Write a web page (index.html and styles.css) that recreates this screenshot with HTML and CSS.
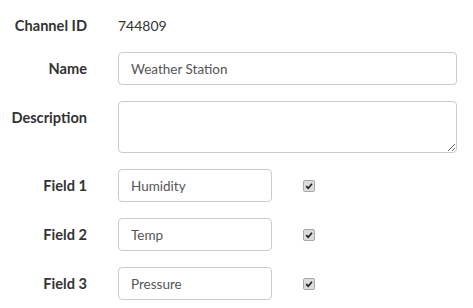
FILE: index.html
```html
<!DOCTYPE html>
<html lang="en">
<head>
    <meta charset="UTF-8">
    <title>Channel Settings</title>
    <link rel="stylesheet" href="styles.css">
</head>
<body>

<form class="channel-form">
    <div class="row row-id">
        <label class="label">Channel ID</label>
        <span class="value">744809</span>
    </div>
    <div class="row">
        <label class="label" for="name">Name</label>
        <input class="input input-wide" id="name" type="text" value="Weather Station">
    </div>
    <div class="row">
        <label class="label" for="desc">Description</label>
        <textarea class="input input-wide textarea" id="desc"></textarea>
    </div>
    <div class="row">
        <label class="label" for="f1">Field 1</label>
        <input class="input input-field" id="f1" type="text" value="Humidity">
        <span class="check"><svg viewBox="0 0 12 12" width="12" height="12"><path d="M2.6 6.2 L5 8.6 L9.6 3.2" fill="none" stroke="#222" stroke-width="2"/></svg></span>
    </div>
    <div class="row">
        <label class="label" for="f2">Field 2</label>
        <input class="input input-field" id="f2" type="text" value="Temp">
        <span class="check"><svg viewBox="0 0 12 12" width="12" height="12"><path d="M2.6 6.2 L5 8.6 L9.6 3.2" fill="none" stroke="#222" stroke-width="2"/></svg></span>
    </div>
    <div class="row">
        <label class="label" for="f3">Field 3</label>
        <input class="input input-field" id="f3" type="text" value="Pressure">
        <span class="check"><svg viewBox="0 0 12 12" width="12" height="12"><path d="M2.6 6.2 L5 8.6 L9.6 3.2" fill="none" stroke="#222" stroke-width="2"/></svg></span>
    </div>
</form>

</body>
</html>
```

FILE: styles.css
```css
body {
    margin: 0;
    background-color: #fff;
    font-family: 'Lato', 'Open Sans', sans-serif;
    color: #333;
}
.channel-form {
    padding-top: 12px;
}
.row {
    display: flex;
    align-items: flex-start;
    margin-bottom: 16px;
}
.row-id {
    margin-bottom: 12px;
}
.label {
    width: 87px;
    flex-shrink: 0;
    text-align: right;
    font-weight: bold;
    font-size: 14.6px;
    line-height: 33px;
    color: #333;
}
.row-id .label,
.row-id .value {
    line-height: 28px;
}
.value {
    margin-left: 31px;
    font-size: 14px;
    color: #333;
}
.input {
    margin-left: 31px;
    box-sizing: border-box;
    height: 33px;
    padding: 0 12px;
    border: 1px solid #ccc;
    border-radius: 4px;
    font-family: inherit;
    font-size: 13.5px;
    color: #555;
    background-color: #fff;
}
.input-wide {
    width: 339px;
}
.textarea {
    height: 52px;
    padding: 6px 12px;
    display: block;
}
.input-field {
    width: 154px;
}
.check {
    margin-left: 31px;
    margin-top: 11px;
    box-sizing: border-box;
    width: 12px;
    height: 12px;
    border: 1px solid #a8a8a8;
    border-radius: 2px;
    background-color: #dcdcdc;
    display: flex;
    align-items: center;
    justify-content: center;
}
.check svg {
    display: block;
}
```
